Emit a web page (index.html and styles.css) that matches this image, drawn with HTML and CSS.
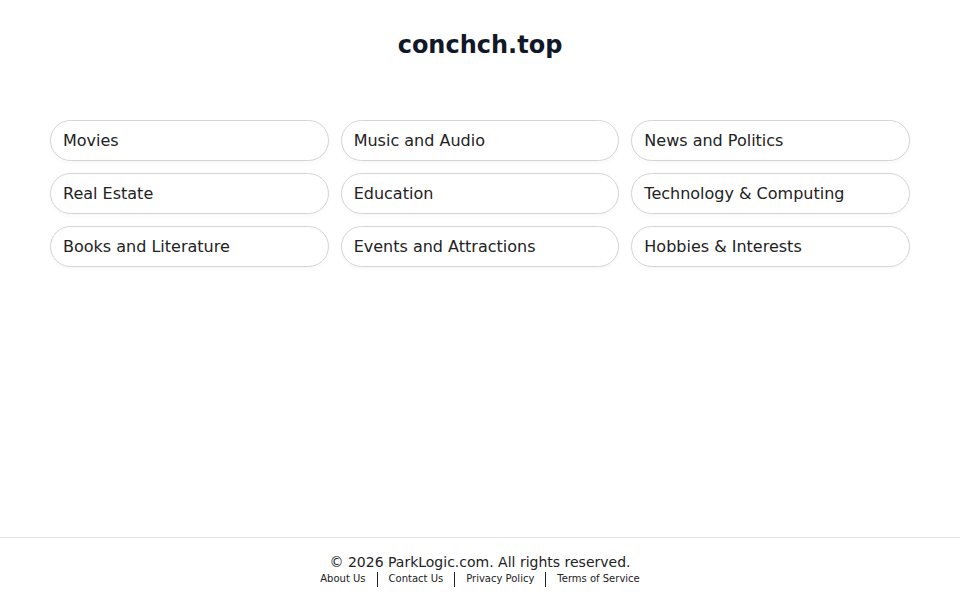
FILE: index.html
```html
<!DOCTYPE html>
<html lang="en">
<head>
    <meta charset="UTF-8">
    <meta name="viewport" content="width=device-width, initial-scale=1.0">
    <title>conchch.top</title>
    <link rel="stylesheet" href="styles.css">
</head>
<body>
    <div class="page">
        <main class="main">
            <h1 class="title">conchch.top</h1>

            <div class="links">
                <a class="link-btn" href="#">Movies</a>
                <a class="link-btn" href="#">Music and Audio</a>
                <a class="link-btn" href="#">News and Politics</a>
                <a class="link-btn" href="#">Real Estate</a>
                <a class="link-btn" href="#">Education</a>
                <a class="link-btn" href="#">Technology &amp; Computing</a>
                <a class="link-btn" href="#">Books and Literature</a>
                <a class="link-btn" href="#">Events and Attractions</a>
                <a class="link-btn" href="#">Hobbies &amp; Interests</a>
            </div>
        </main>

        <footer class="footer">
            <p class="copy">&copy; 2026 ParkLogic.com. All rights reserved.</p>
            <nav class="footer-nav">
                <a href="#">About Us</a>
                <span class="sep"></span>
                <a href="#">Contact Us</a>
                <span class="sep"></span>
                <a href="#">Privacy Policy</a>
                <span class="sep"></span>
                <a href="#">Terms of Service</a>
            </nav>
        </footer>
    </div>
</body>
</html>
```

FILE: styles.css
```css
body {
    margin: 0;
    font-family: "DejaVu Sans", sans-serif;
    color: #222;
    background: #fff;
}
.page {
    min-height: 100vh;
    display: flex;
    flex-direction: column;
}
.main {
    flex: 1;
    width: 860px;
    margin: 0 auto;
}
.title {
    margin: 30px 0 0;
    font-size: 24px;
    line-height: 30px;
    text-align: center;
    color: #111827;
}
.links {
    display: grid;
    grid-template-columns: repeat(3, 1fr);
    gap: 12px 12px;
    margin-top: 60px;
}
.link-btn {
    display: block;
    height: 39px;
    line-height: 39px;
    padding: 0 12px;
    border: 1px solid #d4d4d4;
    border-radius: 21px;
    color: #222;
    font-size: 16px;
    text-decoration: none;
    box-shadow: 0 2px 4px rgba(0, 0, 0, 0.03);
}
.link-btn:hover {
    background: #f7f7f7;
}
.footer {
    border-top: 1px solid #e5e5e5;
    padding: 15px 0 13px;
    text-align: center;
}
.copy {
    margin: 0;
    font-size: 14px;
    line-height: 18px;
    color: #222;
}
.footer-nav {
    display: flex;
    justify-content: center;
    align-items: center;
    gap: 11px;
    font-size: 10px;
    line-height: 16px;
}
.footer-nav a {
    color: #222;
    text-decoration: none;
}
.sep {
    width: 1px;
    height: 15px;
    background: #222;
}
```
